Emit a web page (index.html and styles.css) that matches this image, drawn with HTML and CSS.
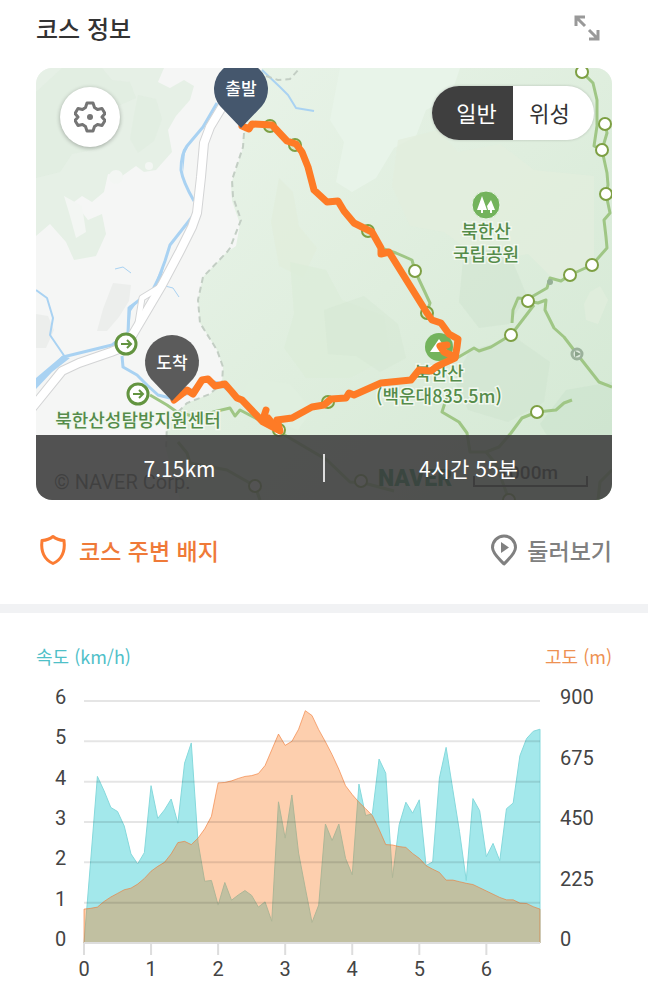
FILE: index.html
```html
<!DOCTYPE html>
<html lang="ko">
<head>
  <meta charset="UTF-8" />
  <meta name="viewport" content="width=device-width, initial-scale=1" />
  <title>코스 정보</title>
  <link rel="stylesheet" href="styles.css">
</head>
<body>
  <main>
    <section class="course">
      <header class="course-header">
        <h2>코스 정보</h2>
        <button type="button" class="expand" aria-label="지도 크게 보기">
          <svg width="26" height="26" viewBox="0 0 26 26" fill="none" stroke="#999" stroke-width="3">
            <path d="M2 11V2h9M2 2l9 9M24 15v9h-9M24 24l-9-9" />
          </svg>
        </button>
      </header>

      <div class="map">
        <svg class="map-canvas" viewBox="36 68 576 432" preserveAspectRatio="xMidYMid slice" role="img" aria-label="북한산 코스 지도">
          <defs>
            <linearGradient id="forest" x1="0" y1="0" x2="1" y2="1">
              <stop offset="0" stop-color="#eaf4ea" />
              <stop offset="0.5" stop-color="#dfeede" />
              <stop offset="1" stop-color="#d3e8d3" />
            </linearGradient>
          </defs>
          <rect x="36" y="68" width="576" height="432" fill="#f5f6f5" />

          <!-- land cover, west -->
          <g fill="#e6f0e6">
            <path d="M36 68h128l-6 14 12 6 14-8 10 6-4 14-14 16-8 14 4 22-16 18-12 2-8-6-14 10-14-2-4 18-12 10-10-6-8 6 14 18 14-6 4 20-10 22-22 4-8-18-16-18-14 12-14 4z" />
            <path d="M113 283l18 2-2 16-10 16-12 14-10 0 6-22z" fill="#eceeec" />
            <path d="M36 314l12 2 6 14-8 18H36z" fill="#eceeec" />
          </g>
          <path d="M62 68h40l10 12 18 2 6 16-18 8 4 18-20 24-30 6-12 18-24 6V92z" fill="#dfecdf" opacity=".7" />
          <path d="M138 95l18 4 6 20-8 22-16 12-8-14 4-24z" fill="#dfecdf" opacity=".7" />
          <g fill="#f3f6f3">
            <circle cx="116" cy="177" r="7" />
            <circle cx="149" cy="166" r="4" />
            <path d="M64 196l18 10 4 26-10 6-6-22z" />
          </g>

          <!-- land cover, national park -->
          <path d="M262 68H612V500H180l-14-50 1-27 20-20 23-9 12-11 1-16-6-17-17-27-2-23 5-23 24-25 9-6 4-22-8-23-1-17 11-33 1-16z" fill="url(#forest)" />
          <path d="M340 68h120l-10 30-24 12-10 26-22 12-18 30-24 14-16-10 8-40-14-22z" fill="#e8f4e9" />
          <path d="M398 140l40-10 20 22 42-8 34 26 60 6v90l-40 14-26-26-44 8-40-30-34-6-18-40z" fill="#e2eedd" opacity=".8" />
          <path d="M279 178l14 14 6 34 18 22-14 30-24-12-8-44z" fill="#e1eedc" opacity=".8" />
          <path d="M290 262l36 8 16 30 42 16 6 40-40 22-44 0-22-30 10-34z" fill="#dcecd9" opacity=".7" />
          <path d="M324 310l40-14 34 28 8 34-26 14-24-16-28-2z" fill="#d5e8d3" opacity=".5" />
          <path d="M463 260l28-12 22 14 14 34-18 28-30 4-20-26z" fill="#cfe4cf" opacity=".55" />
          <path d="M470 350l46-12 34 24-6 40-36 20-40-12-14-30z" fill="#cfe4cf" opacity=".55" />
          <path d="M566 390l46-8v62h-60l-12-20z" fill="#cce2cd" opacity=".6" />
          <path d="M590 292l10-6 8 14-10 24-12-4-2-16z" fill="#dfeddc" />
          <path d="M250 378l40 6 22 26-14 20-36-14-20-20z" fill="#e0efdf" />

          <!-- streams -->
          <g fill="none" stroke="#a9d2f2" stroke-width="3" stroke-linejoin="round">
            <path d="M217 103l-14 24-16 19q-6 8-6 24 2 12 13 31M192 217l-22 28-5 16-10 27-26 20-1 25-16 12-49 12-27 28" />
            <path d="M122 356l1 11 14 8 10 10 11 10 12 3 20-5 12-14 16 4 20 14 18 20 20 14" />
            <path d="M262 70l18 17 8 8 8 13 18 3" stroke-width="2" />
            <path d="M36 290l11 8 6 20-3 17 15 22" stroke-width="2" />
            <path d="M115 269l8-2 8 6M165 286l8 2 6 9" stroke-width="1" />
          </g>
          <path d="M129 306l9-5-7 10-2 20zM36 378l26-22 8 2-18 14-16 17zM183 150l8-9-6 12-2 20zM165 262l-5 22-8 4z" fill="#a9d2f2" />

          <!-- main road -->
          <g fill="none" stroke-linejoin="round">
            <path d="M234 86l-12 21-12 20-6 16-3 34-4 36-5 14-12 24-18 34-26 44-10 17-15 6-32 11-17 8-30 37" stroke="#d3d4d5" stroke-width="10" />
            <path d="M160 287l-18 11-4 25" stroke="#d3d4d5" stroke-width="7" />
            <path d="M234 86l-12 21-12 20-6 16-3 34-4 36-5 14-12 24-18 34-26 44-10 17-15 6-32 11-17 8-30 37" stroke="#fff" stroke-width="8" />
            <path d="M160 287l-18 11-4 25" stroke="#fff" stroke-width="5" />
          </g>

          <!-- park boundary -->
          <path d="M266 76l12 4 12-1 10-11M244 133l-1 14-11 33 1 17 8 23-11 28-3 4-24 25-5 23 2 23 17 27 6 17-1 16-12 11-23 9-20 20-1 27" fill="none" stroke="#c3cec4" stroke-width="2" stroke-dasharray="6 4" />

          <!-- hiking trails -->
          <g fill="none" stroke="#9fc685" stroke-width="3" stroke-linejoin="round">
            <path d="M582 72l11 11 4 17v25l8-1 2 9-5 17 5 23 1 12-2 9 4 19-6 7 2 17 1 11-15 17-22 10-9 6-11-3-3 10-19 11-10-1-5 12-1 13M597 126l-3 20 8 4M534 305l-23 30-20 12-12 4-5-3-17 10" />
            <path d="M528 301l10 2 8-3-1 10 9 18 10 9 13 17 22 28 13 5M572 400l-8 3-8 7-19 2-15 6-11 15-12 14-13 5h-16l-3-19-8-11-17-10 7-22M486 452l10 12 13 36M612 470l-12 12-2 18" />
            <path d="M150 395l17 10 10 7 23 6 13-6 17-4 5 8 5-6 23 12 20 12 44 26 23 22 14 1 30 8M178 442l9 11 3 10 37 7 28 16 5 14" />
            <path d="M381 248l15 5 16 7 3 11 15 32-3 9" />
          </g>
          <g fill="#fff" stroke="#7d9f43" stroke-width="2">
            <circle cx="582" cy="72" r="6" />
            <circle cx="605" cy="124" r="6" />
            <circle cx="602" cy="150" r="6" />
            <circle cx="606" cy="194" r="6" />
            <circle cx="592" cy="265" r="6" />
            <circle cx="570" cy="275" r="6" />
            <circle cx="528" cy="301" r="6" />
            <circle cx="511" cy="335" r="6" />
            <circle cx="537" cy="412" r="6" />
            <circle cx="415" cy="271" r="6" />
            <circle cx="279" cy="430" r="6" />
            <circle cx="361" cy="481" r="6" />
            <circle cx="255" cy="486" r="6" />
            <circle cx="509" cy="500" r="6" />
            <g fill="#d5e9cc">
              <circle cx="270" cy="126" r="6" />
              <circle cx="295" cy="145" r="6" />
              <circle cx="368" cy="231" r="6" />
              <circle cx="427" cy="313" r="6" />
              <circle cx="328" cy="402" r="6" />
            </g>
          </g>
          <circle cx="550" cy="282" r="3" fill="#96b096" />
          <circle cx="577" cy="354" r="5" fill="#dce8dc" stroke="#9bb19b" stroke-width="3" />
          <path d="M575 351l6 3-6 3z" fill="#8ba38b" />

          <!-- trail entrances -->
          <g fill="#fff" stroke="#639440" stroke-width="3">
            <circle cx="126" cy="344" r="10" />
            <circle cx="138" cy="394" r="10" />
            <path d="M121 344h9M127 340l4 4-4 4M133 394h9M139 390l4 4-4 4" fill="none" stroke-width="2" />
          </g>

          <!-- peak and park symbols -->
          <circle cx="439" cy="347" r="14" fill="#73b35c" />
          <path d="M430 352l9-13 9 13z" fill="#fff" />
          <circle cx="486" cy="205" r="14" fill="#73b35c" stroke="#e9f4e6" />
          <path d="M482 196l5 14h-4v3h-2v-3h-4zM491 200l4 10h-3v3h-2v-3h-2l-1-4z" fill="#fff" />
          <g class="map-label" text-anchor="middle">
            <text x="486" y="238">북한산</text>
            <text x="486" y="261">국립공원</text>
            <text x="439" y="380">북한산</text>
            <text x="439" y="403">(백운대835.5m)</text>
            <text x="138" y="427">북한산성탐방지원센터</text>
          </g>

          <!-- recorded route -->
          <g fill="none" stroke="#fe7b26" stroke-width="7" stroke-linejoin="round" stroke-linecap="round">
            <path d="M242 126L249 129L252 124L272 125L287 141L296 144L302 152L308 167L314 190L327 202L338 201L344 211L354 223L372 232L381 248L381 254L389 252L427 313L432 320L441 323L449 334L458 339L457 347L455 358L444 363L436 367L431 371L419 370L411 380L381 383L354 395L349 393L346 398L331 399L324 405L312 407L292 418L277 420L280 431L263 422L242 400L237 398L232 392L225 384L215 386L208 379L202 380L193 394L187 390L174 400" />
            <path d="M263 419L266 410M268 418L277 429M455 357L444 352L440 346L447 345" />
          </g>

          <path d="M241 128l-21-22a27 27 0 1 1 42 0z" fill="#45576d" />
          <path d="M172 401l-21-22a27 27 0 1 1 42 0z" fill="#5b5b5b" />
          <g class="pin-label" text-anchor="middle">
            <text x="241" y="95">출발</text>
            <text x="172" y="369">도착</text>
          </g>

          <text class="map-credit" x="54" y="489">© NAVER Corp.</text>
          <text class="map-logo" x="378" y="486">NAVER</text>
          <text class="map-scale" x="558" y="479" text-anchor="end">1000m</text>
          <path d="M474 476v10h113v-10" fill="none" stroke="#222" stroke-width="2" />
        </svg>

        <div class="map-controls">
          <button type="button" class="settings" aria-label="지도 설정">
            <svg width="32" height="32" viewBox="0 0 32 32" fill="none" stroke="#757575" stroke-width="3" stroke-linejoin="round">
              <path d="M13 2h6l1.500 4.500 3 2L28 7.500l3 5-3 3.500 3 3.500-3 5-4.500-1-3 2L19 30h-6l-1.500-4.500-3-2-4.500 1-3-5L4 16l-3-3.500 3-5 4.500 1 3-2z" />
              <circle cx="16" cy="16" r="3" fill="#757575" stroke="none" />
            </svg>
          </button>
          <div class="map-type" role="group" aria-label="지도 종류">
            <button type="button" class="active" aria-pressed="true">일반</button>
            <button type="button" aria-pressed="false">위성</button>
          </div>
        </div>

        <div class="summary">
          <span>7.15km</span>
          <span>4시간 55분</span>
        </div>
      </div>

      <nav class="course-links">
        <a href="#badges" class="badges">
          <svg width="34" height="32" viewBox="0 0 34 32" fill="none" stroke="#fb7c33" stroke-width="3" stroke-linejoin="round">
            <path d="M17 2.500C14 5 10 6.300 6 6.500c-1.200 10 1 18.500 11 23 10-4.500 12.200-13 11-23C24 6.300 20 5 17 2.500z" />
          </svg>
          코스 주변 배지
        </a>
        <a href="#explore" class="explore">
          <svg width="28" height="32" viewBox="0 0 28 32" fill="none" stroke="#808080" stroke-width="3" stroke-linejoin="round">
            <path d="M14 30C9 24.500 2.500 19.500 2.500 13.500a11.500 11.500 0 0 1 23 0C25.500 19.500 19 24.500 14 30z" />
            <path d="M11 8l8 5.500-8 5.500z" fill="#808080" stroke="none" />
          </svg>
          둘러보기
        </a>
      </nav>
    </section>

    <section class="graph">
      <div class="legend">
        <span class="speed">속도 (km/h)</span>
        <span class="altitude">고도 (m)</span>
      </div>
      <div class="plot">
        <div class="axis axis-left">
          <span>6</span><span>5</span><span>4</span><span>3</span><span>2</span><span>1</span><span>0</span>
        </div>
        <svg class="chart" viewBox="0 0 68 60" preserveAspectRatio="none" role="img" aria-label="거리별 속도와 고도">
          <path id="speed" class="area-speed" />
          <path id="altitude" class="area-altitude" />
          <path class="grid" d="M0 0H68M0 10H68M0 20H68M0 30H68M0 40H68M0 50H68" />
          <path class="baseline" d="M0 60H68" />
          <path class="ticks" d="M0 60v3M10 60v3M20 60v3M30 60v3M40 60v3M50 60v3M60 60v3" />
        </svg>
        <div class="axis axis-right">
          <span>900</span><span>675</span><span>450</span><span>225</span><span>0</span>
        </div>
        <div class="axis-bottom">
          <span>0</span><span>1</span><span>2</span><span>3</span><span>4</span><span>5</span><span>6</span>
        </div>
      </div>
    </section>
  </main>

  <script>
    // One sample every 0.1 km
    const speed = [
      0, 2.05, 4.13, 3.77, 3.36, 3.26, 2.9, 2.21, 1.96, 2.24, 3.9, 3.09, 3.3, 3.57, 2.97, 4.46, 4.96,
      2.5, 1.53, 1.55, 0.94, 1.5, 1.06, 1.19, 1.3, 1.18, 0.89, 1.02, 0.54, 3.5, 2.6, 3.67, 2.23, 1.36,
      0.51, 0.94, 2.95, 2.54, 2.95, 2.1, 1.69, 3.94, 3.16, 3.2, 4.56, 4.21, 1.62, 2.93, 3.49, 3.22,
      3.55, 1.92, 2.01, 4.09, 4.85, 3.8, 2.76, 1.55, 3.58, 3.28, 2.14, 2.47, 2.04, 3.33, 3.47, 4.64,
      5.07, 5.25, 5.3
    ];
    const altitude = [
      126, 129, 134, 155, 171, 185, 198, 204, 219, 240, 267, 285, 300, 332, 374, 378, 366, 390, 425,
      471, 596, 597, 603, 612, 620, 623, 630, 660, 719, 777, 735, 750, 795, 864, 846, 794, 749, 701,
      647, 585, 552, 524, 500, 474, 423, 366, 365, 359, 356, 333, 315, 288, 275, 263, 234, 234, 228,
      222, 218, 206, 194, 182, 170, 161, 161, 149, 147, 135, 126
    ];

    function drawArea(id, values, max) {
      const points = values.map((v, i) => i + ' ' + (60 - v / max * 60).toFixed(1));
      document.getElementById(id).setAttribute('d', 'M0 60L' + points.join('L') + 'L68 60Z');
    }

    drawArea('speed', speed, 6);
    drawArea('altitude', altitude, 900);
  </script>
</body>
</html>
```

FILE: styles.css
```css
*, *::before, *::after {
  box-sizing: border-box;
}
body {
  margin: 0;
  background: #fff;
  color: #333;
  font-family: "Noto Sans CJK KR", "Noto Sans", sans-serif;
}
button {
  border: none;
  padding: 0;
  background: none;
  font: inherit;
  color: inherit;
  cursor: pointer;
}
svg {
  display: block;
}

/* Course */
.course {
  padding: 12px 36px 38px;
  border-bottom: 9px solid #f1f2f4;
}
.course-header {
  display: flex;
  justify-content: space-between;
  align-items: center;
  margin-bottom: 24px;
}
.course-header h2 {
  margin: 0;
  font-size: 24px;
  line-height: 32px;
  font-weight: 500;
}
.expand {
  width: 50px;
  height: 32px;
  display: flex;
  justify-content: center;
  align-items: center;
}

/* Map */
.map {
  position: relative;
  aspect-ratio: 4 / 3;
  border-radius: 16px;
  overflow: hidden;
}
.map-canvas {
  width: 100%;
  height: 100%;
}
.map-label {
  font-size: 18px;
  font-weight: 500;
  fill: #558c4a;
  stroke: #f1f8ef;
  stroke-width: 3px;
  paint-order: stroke;
}
.pin-label {
  font-size: 17px;
  font-weight: 500;
  fill: #fff;
}
.map-credit {
  font-family: Roboto, sans-serif;
  font-size: 20px;
  fill: #444;
}
.map-logo {
  font-family: Roboto, sans-serif;
  font-size: 23px;
  font-weight: 900;
  fill: #00783c;
}
.map-scale {
  font-family: Roboto, sans-serif;
  font-size: 19px;
  font-weight: 500;
  fill: #111;
}
.map-controls {
  position: absolute;
  top: 18px;
  left: 24px;
  right: 18px;
  display: flex;
  justify-content: space-between;
  align-items: flex-start;
}
.settings {
  width: 60px;
  height: 60px;
  margin-top: 1px;
  display: flex;
  justify-content: center;
  align-items: center;
  background: #fff;
  border-radius: 50%;
  box-shadow: 0 1px 4px rgba(0, 0, 0, 0.3);
}
.map-type {
  display: flex;
  border-radius: 27px;
  overflow: hidden;
  background: #fff;
  box-shadow: 0 0 3px rgba(0, 0, 0, 0.2);
}
.map-type button {
  width: 81px;
  height: 54px;
  padding: 0 8px 3px 0;
  font-size: 22px;
}
.map-type .active {
  padding: 0 0 3px 8px;
  background: #3f3f3f;
  color: #fff;
}
.summary {
  position: absolute;
  left: 0;
  right: 0;
  bottom: 0;
  height: 65px;
  display: flex;
  align-items: center;
  background: rgba(64, 64, 64, 0.9);
  color: #fff;
  font-size: 21px;
  line-height: 28px;
}
.summary span {
  flex: 1;
  text-align: center;
}
.summary span + span {
  border-left: 2px solid #ddd;
}

/* Links */
.course-links {
  display: flex;
  justify-content: space-between;
  margin-top: 34px;
}
.course-links a {
  display: flex;
  align-items: center;
  gap: 9px;
  font-size: 23px;
  line-height: 32px;
  font-weight: 500;
  text-decoration: none;
}
.badges {
  color: #ef7a38;
}
.explore {
  color: #808080;
}

/* Speed and altitude graph */
.graph {
  padding: 31px 36px 16px;
}
.legend {
  display: flex;
  justify-content: space-between;
  margin-bottom: 33px;
  font-size: 18px;
  line-height: 24px;
}
.speed {
  color: #4fc0c8;
}
.altitude {
  color: #ee9152;
}
.plot {
  display: grid;
  grid-template-columns: 48px 1fr 72px;
  color: #444;
  font-family: Roboto, sans-serif;
  font-size: 20px;
  line-height: 24px;
}
.axis {
  display: flex;
  flex-direction: column;
  justify-content: space-between;
  margin: -16px 0 -8px;
}
.axis-left {
  padding-left: 19px;
}
.axis-right {
  padding-left: 20px;
}
.chart {
  width: 100%;
  height: 242px;
  overflow: visible;
}
.chart path {
  fill: none;
  stroke-width: 1px;
  vector-effect: non-scaling-stroke;
}
.chart .area-speed {
  fill: #a3e8eb;
  stroke: #86d9dc;
}
.chart .area-altitude {
  fill: rgba(249, 118, 24, 0.35);
  stroke: rgba(240, 120, 50, 0.6);
}
.chart .grid {
  stroke: rgba(0, 0, 0, 0.1);
  stroke-width: 2px;
}
.chart .baseline,
.chart .ticks {
  stroke: #ddd;
  stroke-width: 2px;
}
.axis-bottom {
  grid-column: 2;
  display: grid;
  grid-template-columns: repeat(6, 10fr) 8fr;
  margin-top: 14px;
}
.axis-bottom span {
  width: 20px;
  margin-left: -10px;
  text-align: center;
}
```
